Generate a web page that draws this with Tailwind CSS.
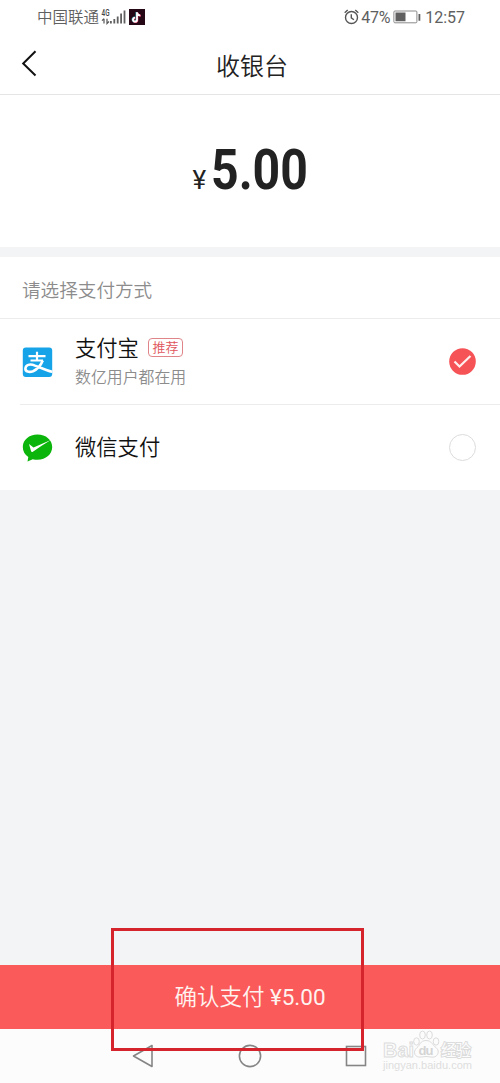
<!DOCTYPE html>
<html lang="zh-CN">
<head>
<meta charset="utf-8">
<title>收银台</title>
<script src="https://cdn.jsdelivr.net/npm/@tailwindcss/browser@4"></script>
</head>
<body class="bg-white">
<div class="relative flex h-[1083px] w-[500px] flex-col overflow-hidden bg-[#f3f4f6] font-['Roboto','Noto_Sans_CJK_SC',sans-serif] text-[#222]">
  <!-- Status bar -->
  <div class="flex h-[34px] shrink-0 items-center justify-between bg-white pr-[35px] pl-[37px] text-[#606060]">
    <div class="flex items-center">
      <span class="w-[64px] pt-[3px] text-[15.5px] leading-none font-[350] whitespace-nowrap">中国联通</span>
      <svg class="h-[18px] w-[25px]" viewBox="0 0 25 18">
        <text transform="translate(.5 8) scale(.8 1.15)" font-size="8" font-weight="500" fill="#444">4G</text>
        <path d="M3 15.500v-4.800M1 12.700l2-2M6 10.700v4.800l2-2" fill="none" stroke="#555" stroke-width="1.200"/>
        <path d="M9.900 13v2.500M13.300 11v4.500M16.700 8.500v7M20.100 5.500v10M23.500 2.500v13" stroke="#606060" stroke-width="1.800"/>
      </svg>
      <svg class="ml-[3px] h-4 w-4" viewBox="0 0 16 16">
        <path fill="#260716" d="M0 0h16v16H0z"/>
        <g fill="none" stroke-width="1.800"><path stroke="#35d5dc" d="M7.500 3v7.500a2 2 0 1 1-2-2"/><path stroke="#f3456b" d="M8.400 3.500v7.500a2 2 0 1 1-2-2M8.400 4q.6 2.500 3.400 2.800"/><path stroke="#fff" d="M8 3.200v7.500a2 2 0 1 1-2-2M8 3.700q.6 2.500 3.200 2.600"/></g>
      </svg>
    </div>
    <div class="flex items-center">
      <svg class="h-4 w-[15px]" viewBox="0 0 15 16" fill="none" stroke="#555" stroke-width="1.400"><circle cx="7.500" cy="8.500" r="6"/><path d="M7.300 5.200v3.600l2.600 2M.7 3.700l3-2.700M14.300 3.700l-3-2.700"/></svg>
      <span class="ml-[2px] w-[31px] pt-px text-[16px] leading-none tracking-[-0.2px]">47%</span>
      <svg class="ml-[1px] h-[14px] w-[28px]" viewBox="0 0 28 14"><rect x=".9" y="1" width="23" height="11.800" rx="1" fill="none" stroke="#8a8a8a"/><path fill="#606060" d="M2.500 2.500H12.500v8.800H2.500zM25.500 4h1.800v6.800h-1.800z"/></svg>
      <span class="ml-[4px] pt-px text-[16px] leading-none">12:57</span>
    </div>
  </div>
  <!-- Title bar -->
  <div class="flex h-[61px] shrink-0 items-center border-b border-[#e5e5e5] bg-white pl-[20px]">
    <svg class="h-7 w-[18px]" viewBox="0 0 18 28"><path d="M15.500 1.200 3.200 13.500l12.300 12" fill="none" stroke="#111" stroke-width="2"/></svg>
    <h1 class="ml-[178px] pt-[5px] text-[24px] leading-none font-[350]">收银台</h1>
  </div>
  <!-- Amount -->
  <div class="flex h-[152px] shrink-0 items-baseline bg-white pt-[47px] pl-[192.500px]">
    <span class="w-[18.500px] text-[26px] leading-none font-normal">¥</span>
    <span class="inline-block origin-left scale-x-[0.86] text-[56px] leading-none font-bold">5.00</span>
  </div>
  <!-- Payment methods -->
  <div class="mt-[10px] flex h-[233px] shrink-0 flex-col bg-white">
    <div class="flex h-[62px] shrink-0 items-center border-b border-[#ececec] pt-[8px] pl-[22px] text-[18.600px] leading-none font-[350] text-[#8c8c8c]">请选择支付方式</div>
    <div class="ml-[20px] flex h-[86px] shrink-0 items-center border-b border-[#ececec] pr-[24px] pl-[2px]">
      <svg class="h-[30px] w-[31px]" viewBox="0 0 31 30"><rect x=".8" y=".5" width="29.400" height="29.500" rx="3" fill="#16a3e8"/><path d="M6.500 9.200h17M15 4.800v9M8.500 13.500h12.500" fill="none" stroke="#fff" stroke-width="2.200"/><path d="M20.800 13.500Q17.500 21.500 11 24.200c-4 1.500-7.800.3-7.600-2.700.2-3.500 4.200-5.200 9.600-2.900 4.500 1.800 11.500 5 17.200 6.200" fill="none" stroke="#fff" stroke-width="2.600"/></svg>
      <div class="ml-[22px] flex flex-1 flex-col">
        <div class="flex h-[25px] items-center">
          <span class="text-[21.300px] leading-none font-[350] text-[#111]">支付宝</span>
          <span class="mb-[2px] ml-[9px] flex h-[19px] w-[35px] items-center justify-center rounded-[4px] border border-[#df858a] text-[13px] leading-none font-[350] text-[#df555b]">推荐</span>
        </div>
        <span class="mt-[9px] mb-px text-[15.900px] leading-none font-[350] text-[#8c8c8c]">数亿用户都在用</span>
      </div>
      <svg class="h-[27px] w-[27px]" viewBox="0 0 27 27"><circle cx="13.500" cy="13.500" r="13.300" fill="#f65357"/><path d="m5.500 13.500 5 5 11-10.500" fill="none" stroke="#fff0ed" stroke-width="2.200"/></svg>
    </div>
    <div class="ml-[20px] flex h-[85px] items-center pr-[24px] pl-[2px]">
      <svg class="h-[28px] w-[31px]" viewBox="0 0 31 28"><path fill="#0bb50b" d="M15.500 .5C24 .5 30.200 6 30.200 13S24 25.800 15.500 25.800q-2.500 0-4.700-.6L5.500 27.500l.8-4.400Q.8 19 .8 13C.8 6 7 .5 15.500 .5Z"/><path fill="#fff" d="m7 10 4.500 3.500L28.800 6Q19 12 10.500 17.900 9.500 18.400 9 17Z"/></svg>
      <span class="ml-[22px] flex-1 text-[21.300px] leading-none font-[350] text-[#111]">微信支付</span>
      <span class="h-[27px] w-[27px] rounded-full border border-[#dcdcdc]"></span>
    </div>
  </div>
  <div class="flex-1"></div>
  <button class="flex h-[64px] shrink-0 items-center justify-center bg-[#fa5a5a] pt-px text-[22.500px] leading-none font-[350] whitespace-pre text-[#fff3f0]">确认支付 <span class="font-normal">¥5.00</span></button>
  <!-- System navigation -->
  <div class="flex h-[54px] shrink-0 items-center bg-[#fcfcfc] pl-[132px]">
    <svg class="h-6 w-[236px]" viewBox="0 0 236 24" fill="none" stroke="#858585" stroke-width="1.600"><path stroke-linejoin="round" d="M20 1.500v21L1.500 12z"/><circle cx="118" cy="12" r="10.600"/><rect x="214.500" y="2.500" width="19" height="19"/></svg>
  </div>
  <!-- Watermark -->
  <svg class="absolute top-[1028px] left-[380px] h-[46px] w-[96px]" viewBox="0 0 96 46">
    <g fill="#fcfcfc" stroke="#dcdcdc" stroke-width="1" font-weight="700">
      <text x="3" y="29" font-size="20" font-family="Liberation Sans" textLength="31" lengthAdjust="spacingAndGlyphs">Bai</text>
      <path d="M46 12.500c6 0 6.500 5 10 7 5 4 1 11-5 9.500q-5-1-10 0c-6 1-9-5-4-9.500 3-2 3-7 9-7Z"/>
      <ellipse cx="36.500" cy="13.500" rx="2.800" ry="3.700"/><ellipse cx="42.500" cy="7" rx="2.800" ry="4"/><ellipse cx="49.500" cy="7" rx="2.800" ry="4"/><ellipse cx="56" cy="13.500" rx="2.800" ry="3.700"/>
      <text x="61" y="28" font-size="15.500" font-weight="400" font-family="Noto Sans CJK SC" textLength="30" stroke-width="2" paint-order="stroke">经验</text>
      <text x="38.500" y="27" font-size="13" font-family="Liberation Sans" textLength="15" fill="#d4d4d4" stroke="none">du</text>
    </g>
    <text x="3" y="41" font-size="10" font-family="Liberation Sans" textLength="89" lengthAdjust="spacingAndGlyphs" fill="#dedede">jingyan.baidu.com</text>
  </svg>
  <!-- Highlight frame -->
  <div class="absolute top-[928px] left-[111px] h-[123px] w-[253px] border-3 border-[#d5242b]"></div>
</div>
</body>
</html>
